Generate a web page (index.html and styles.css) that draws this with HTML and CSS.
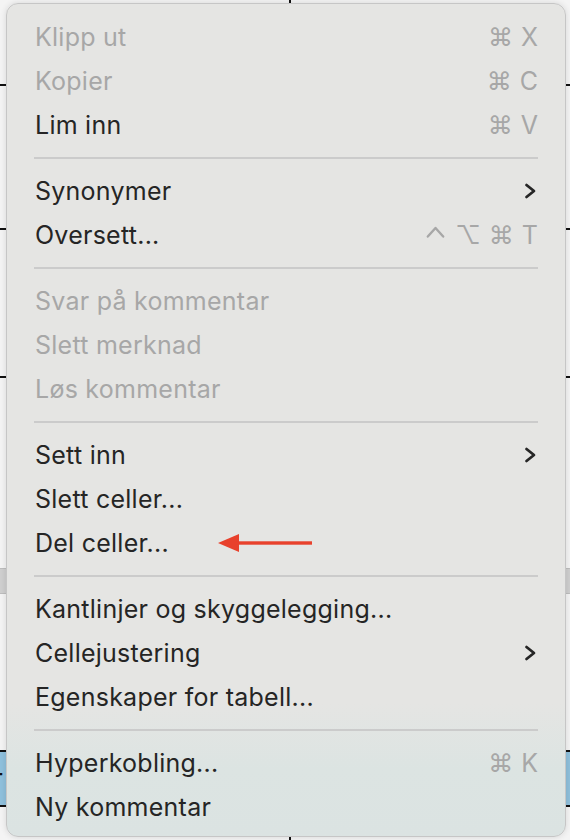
FILE: index.html
```html
<!DOCTYPE html>
<html lang="nb">
<head>
    <meta charset="UTF-8">
    <title>Kontekstmeny</title>
    <link rel="stylesheet" href="styles.css">
</head>
<body>
    <div id="page">
        <!-- table behind the menu -->
        <div class="sheet">
            <div class="trow r1"><div class="cell split"></div><div class="cell"></div></div>
            <div class="trow r2"></div>
            <div class="trow r3"></div>
            <div class="trow r4"></div>
            <div class="trow grayband"></div>
            <div class="trow r5"></div>
            <div class="trow blueband"><span class="cut">r</span></div>
            <div class="trow r6"><div class="cell split"></div><div class="cell"></div></div>
        </div>

        <div class="menu">
            <div class="item off"><span class="label">Klipp ut</span><span class="keys"><span>⌘</span><span>X</span></span></div>
            <div class="item off"><span class="label">Kopier</span><span class="keys"><span>⌘</span><span>C</span></span></div>
            <div class="item"><span class="label">Lim inn</span><span class="keys"><span>⌘</span><span>V</span></span></div>
            <div class="sep"></div>
            <div class="item"><span class="label">Synonymer</span>
                <svg class="chev" width="13" height="16" viewBox="0 0 13 16"><path d="M2.5 2 L10 8 L2.5 14" fill="none" stroke="#262626" stroke-width="2.8" stroke-linecap="round" stroke-linejoin="round"/></svg>
            </div>
            <div class="item"><span class="label">Oversett...</span>
                <span class="keys">
                    <svg class="ctrl" width="19" height="18" viewBox="0 0 19 18"><path d="M1.8 10.5 L9.5 2 L17.2 10.5" fill="none" stroke="#a7a7a7" stroke-width="2.4" stroke-linecap="round" stroke-linejoin="round"/></svg>
                    <span>⌥</span><span>⌘</span><span>T</span>
                </span>
            </div>
            <div class="sep"></div>
            <div class="item off"><span class="label">Svar på kommentar</span></div>
            <div class="item off"><span class="label">Slett merknad</span></div>
            <div class="item off"><span class="label">Løs kommentar</span></div>
            <div class="sep"></div>
            <div class="item"><span class="label">Sett inn</span>
                <svg class="chev" width="13" height="16" viewBox="0 0 13 16"><path d="M2.5 2 L10 8 L2.5 14" fill="none" stroke="#262626" stroke-width="2.8" stroke-linecap="round" stroke-linejoin="round"/></svg>
            </div>
            <div class="item"><span class="label">Slett celler...</span></div>
            <div class="item"><span class="label">Del celler...</span>
                <svg class="pointer" width="96" height="20" viewBox="0 0 96 20"><polygon points="0,10 21,1 21,19" fill="#e8412c"/><rect x="18" y="8.3" width="76" height="3.4" fill="#e8412c"/></svg>
            </div>
            <div class="sep"></div>
            <div class="item"><span class="label">Kantlinjer og skyggelegging...</span></div>
            <div class="item"><span class="label">Cellejustering</span>
                <svg class="chev" width="13" height="16" viewBox="0 0 13 16"><path d="M2.5 2 L10 8 L2.5 14" fill="none" stroke="#262626" stroke-width="2.8" stroke-linecap="round" stroke-linejoin="round"/></svg>
            </div>
            <div class="item"><span class="label">Egenskaper for tabell...</span></div>
            <div class="sep"></div>
            <div class="item"><span class="label">Hyperkobling...</span><span class="keys"><span>⌘</span><span>K</span></span></div>
            <div class="item"><span class="label">Ny kommentar</span></div>
        </div>
    </div>
</body>
</html>
```

FILE: styles.css
```css
body {
    margin: 0;
    background: #ffffff;
    font-family: "Inter", "Liberation Sans", "DejaVu Sans", sans-serif;
}
#page {
    position: relative;
    width: 570px;
    height: 840px;
    overflow: hidden;
}
.sheet {
    display: flex;
    flex-direction: column;
    height: 840px;
    background: #f4f4f4;
}
.trow {
    display: flex;
    box-sizing: border-box;
}
.cell {
    flex: 1;
}
.split {
    flex: 0 0 291px;
    border-right: 2px solid #111;
    box-sizing: border-box;
}
.r1 { height: 86px; border-bottom: 2px solid #111; }
.r2 { height: 144px; border-bottom: 2px solid #111; }
.r3 { height: 148px; border-bottom: 2px solid #111; }
.r4 { height: 190px; }
.grayband {
    height: 26px;
    background: #cfcfcf;
    border-top: 1px solid #bdbdbd;
    border-bottom: 1px solid #bdbdbd;
}
.r5 { height: 156px; }
.blueband {
    height: 57px;
    background: #8fc0dc;
    border-top: 2px solid #111;
    border-bottom: 2px solid #111;
    align-items: center;
    font-size: 26px;
    color: #111;
}
.cut {
    margin-left: -7px;
}
.r6 { flex: 1; }

.menu {
    position: absolute;
    top: 3px;
    left: 6px;
    width: 560px;
    height: 834px;
    box-sizing: border-box;
    padding: 11px 27px 7px 28px;
    border: 1px solid #c6c6c6;
    border-radius: 12px;
    background: linear-gradient(to bottom, #e5e5e3 0%, #e5e5e3 84%, #dce4e2 92%, #dbe3e2 100%);
    box-shadow: 0 0 6px rgba(0, 0, 0, 0.12);
    font-size: 25px;
    letter-spacing: 0.25px;
    color: #252525;
}
.item {
    position: relative;
    display: flex;
    align-items: center;
    justify-content: space-between;
    height: 44px;
}
.item.off {
    color: #a7a7a7;
}
.keys {
    display: flex;
    align-items: center;
    gap: 8px;
    color: #a7a7a7;
    letter-spacing: 0;
}
.ctrl {
    margin-right: 2px;
}
.chev {
    margin-right: 1px;
}
.pointer {
    position: absolute;
    left: 183px;
    top: 12px;
}
.sep {
    height: 22px;
    display: flex;
    align-items: center;
    margin-left: -1px;
}
.sep::before {
    content: "";
    flex: 1;
    height: 2px;
    background: #cbcbcb;
}
```
